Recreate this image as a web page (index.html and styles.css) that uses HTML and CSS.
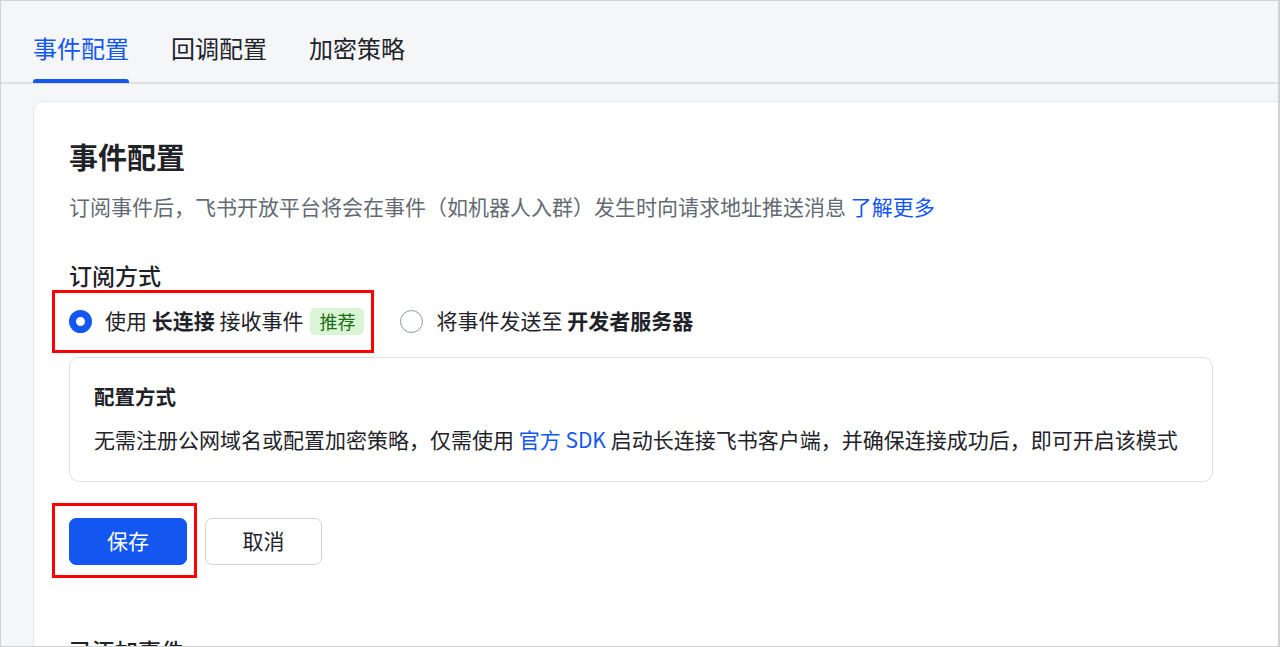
FILE: index.html
```html
<!DOCTYPE html>
<html lang="zh-CN">
<head>
<meta charset="utf-8">
<title>事件配置</title>
<link rel="stylesheet" href="styles.css">
</head>
<body>
<div class="frame">
  <nav class="tabs">
    <div class="tab active">事件配置</div>
    <div class="tab">回调配置</div>
    <div class="tab">加密策略</div>
  </nav>
  <section class="card">
    <h1 class="title">事件配置</h1>
    <p class="desc">订阅事件后，飞书开放平台将会在事件（如机器人入群）发生时向请求地址推送消息 <a class="link">了解更多</a></p>
    <h2 class="section">订阅方式</h2>
    <div class="radios">
      <label class="opt marked">
        <span class="radio checked"></span>
        <span class="opt-text">使用 <b>长连接</b> 接收事件</span>
        <span class="tag">推荐</span>
      </label>
      <label class="opt">
        <span class="radio"></span>
        <span class="opt-text">将事件发送至 <b>开发者服务器</b></span>
      </label>
    </div>
    <div class="info">
      <div class="info-title">配置方式</div>
      <div class="info-text">无需注册公网域名或配置加密策略，仅需使用 <a class="link">官方 SDK</a> 启动长连接飞书客户端，并确保连接成功后，即可开启该模式</div>
    </div>
    <div class="actions">
      <span class="btn-wrap marked-btn"><button class="btn primary">保存</button></span>
      <button class="btn">取消</button>
    </div>
    <h2 class="section next">已添加事件</h2>
  </section>
</div>
</body>
</html>
```
FILE: styles.css
```css
html, body {
  margin: 0;
  padding: 0;
}
body {
  font-family: "Noto Sans CJK SC", "Noto Sans", sans-serif;
  color: #1f2329;
  background: #fff;
}
.frame {
  width: 1280px;
  height: 647px;
  box-sizing: border-box;
  border: 1px solid #cfd1d4;
  border-right-width: 2px;
  background: #f5f6f7;
  overflow: hidden;
}
.tabs {
  display: flex;
  align-items: flex-end;
  gap: 42px;
  height: 81px;
  padding-left: 32px;
  border-bottom: 2px solid #dee0e3;
}
.tab {
  position: relative;
  font-size: 24px;
  line-height: 34px;
  padding-bottom: 17px;
  color: #1f2329;
  white-space: nowrap;
}
.tab.active {
  color: #1456f0;
}
.tab.active::after {
  content: "";
  position: absolute;
  left: 0;
  right: 0;
  bottom: -1px;
  height: 4px;
  background: #1456f0;
  border-radius: 3px 3px 0 0;
}
.card {
  margin: 17px -30px 0 32px;
  background: #fff;
  border: 1px solid #e4e6e9;
  border-radius: 10px;
  padding: 34px 0 0 35px;
  min-height: 700px;
}
.title {
  margin: 0;
  font-size: 29px;
  line-height: 40px;
  font-weight: 600;
  color: #1f2329;
}
.desc {
  margin: 15px 0 0;
  font-size: 21px;
  line-height: 30px;
  color: #646a73;
}
.link {
  color: #1456f0;
  text-decoration: none;
}
.section {
  margin: 38px 0 0;
  font-size: 23px;
  line-height: 32px;
  font-weight: 500;
  color: #1f2329;
}
.radios {
  display: flex;
  align-items: center;
  gap: 36px;
  margin-top: 13px;
  height: 34px;
}
.opt {
  position: relative;
  display: flex;
  align-items: center;
  height: 34px;
  font-size: 21px;
  line-height: 34px;
  color: #1f2329;
  white-space: nowrap;
}
.opt-text {
  position: relative;
  top: -1px;
}
.opt b {
  font-weight: 600;
}
.marked::after {
  content: "";
  position: absolute;
  left: -17px;
  right: -10px;
  top: -14px;
  bottom: -15px;
  border: 3px solid #ff0000;
}
.radio {
  box-sizing: border-box;
  width: 23px;
  height: 23px;
  border-radius: 50%;
  border: 1.5px solid #8f959e;
  background: #fff;
  margin-right: 13px;
  flex: none;
}
.radio.checked {
  border: 7px solid #1456f0;
}
.tag {
  margin-left: 7px;
  height: 27px;
  padding: 0 9px 1px;
  box-sizing: border-box;
  font-size: 18px;
  line-height: 26px;
  background: #d9f5d6;
  color: #1e6b15;
  border-radius: 5px;
}
.info {
  box-sizing: border-box;
  width: 1144px;
  margin-top: 19px;
  border: 1px solid #dee0e3;
  border-radius: 10px;
  padding: 23px 24px 27px 24px;
}
.info-title {
  font-size: 20.5px;
  line-height: 30px;
  font-weight: 600;
}
.info-text {
  margin-top: 13px;
  font-size: 21px;
  line-height: 30px;
  white-space: nowrap;
}
.actions {
  display: flex;
  gap: 18px;
  margin-top: 36px;
}
.btn-wrap {
  position: relative;
  display: flex;
}
.marked-btn::after {
  content: "";
  position: absolute;
  left: -17px;
  right: -10px;
  top: -15px;
  bottom: -13px;
  border: 3px solid #ff0000;
}
.btn {
  box-sizing: border-box;
  width: 117px;
  height: 47px;
  border-radius: 7px;
  border: 1px solid #d0d3d6;
  background: #fff;
  font-family: inherit;
  font-size: 21px;
  line-height: 30px;
  color: #1f2329;
  padding: 0 0 4px;
}
.btn.primary {
  width: 118px;
  background: #1456f0;
  border-color: #1456f0;
  color: #fff;
}
.section.next {
  margin-top: 69px;
}
```
